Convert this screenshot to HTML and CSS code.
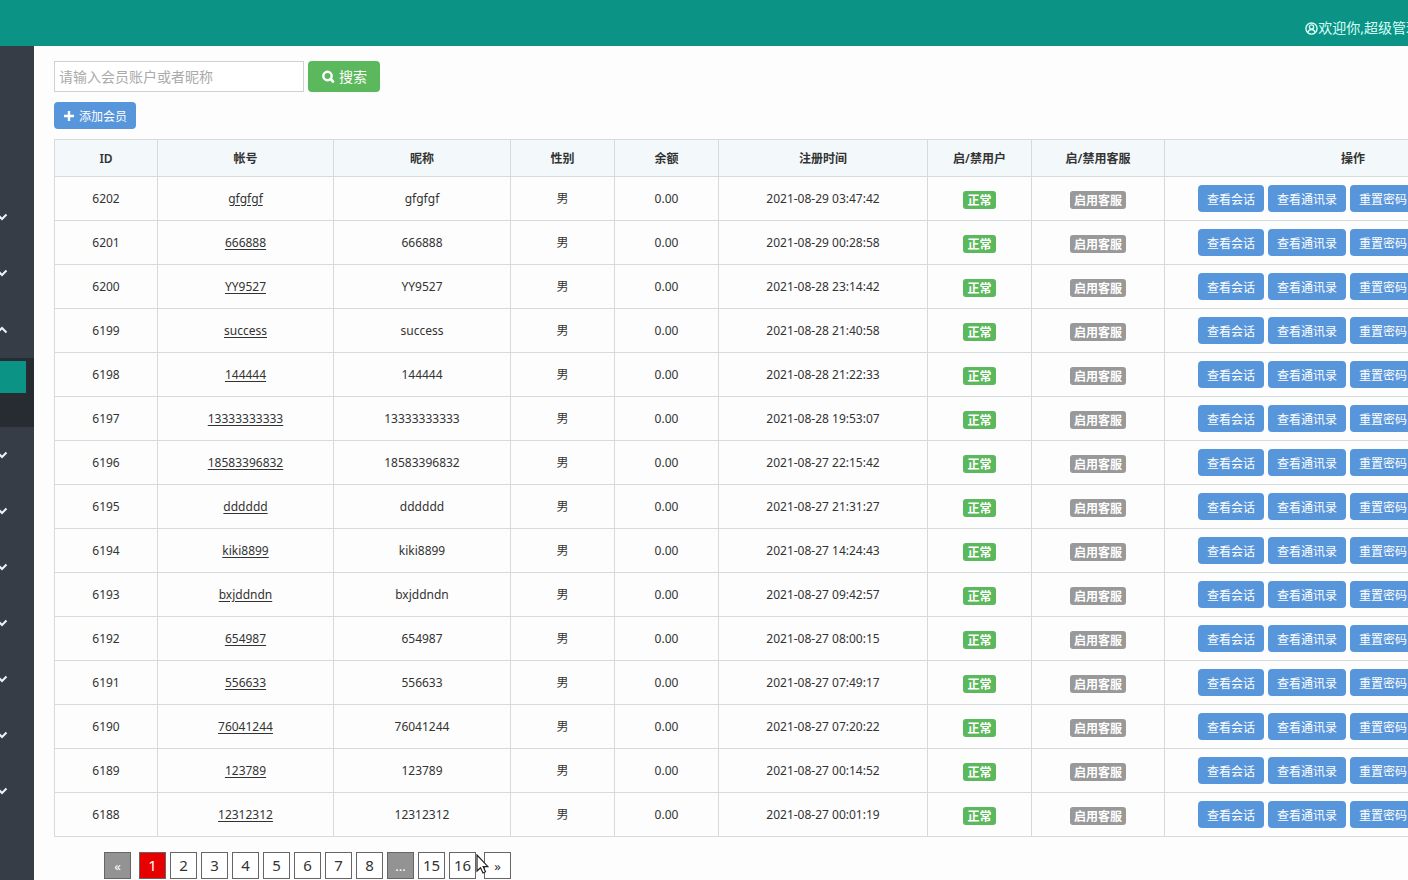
FILE: index.html
```
<!DOCTYPE html>
<html lang="zh-CN">
<head>
<meta charset="utf-8">
<title>会员管理</title>
<link rel="stylesheet" href="styles.css">
</head>
<body>
<div class="page">
  <header class="topbar">
    <svg class="user-icon" viewBox="0 0 14 14" fill="none" stroke="currentColor" stroke-width="1.5"><circle cx="7" cy="7" r="6"/><circle cx="7" cy="5.4" r="2.3"/><path d="M3.2 11.2c.4-2 1.7-3.2 3.8-3.2s3.400 1.200 3.800 3.200"/></svg>
    <span>欢迎你,超级管理员</span>
  </header>
  <div class="body">
    <nav class="sidebar" id="sidebar"></nav>
    <main class="main">
      <form class="search">
        <input class="search-input" type="text" aria-label="搜索会员" placeholder="请输入会员账户或者昵称">
        <button class="btn btn-search" type="button"><svg class="icon-search" viewBox="0 0 14 14" fill="none" stroke="currentColor"><circle cx="6.500" cy="6" r="4.200" stroke-width="2.400"/><path d="M9.800 9.300L12 11.500" stroke-width="2.800" stroke-linecap="round"/></svg>搜索</button>
      </form>
      <div class="toolbar">
        <button class="btn btn-blue btn-add" type="button"><svg class="icon-plus" viewBox="0 0 10 10" stroke="currentColor" stroke-width="2.400"><path d="M5 0V10M0 5H10"/></svg>添加会员</button>
      </div>
      <table class="members">
        <colgroup><col class="c-id"><col class="c-name"><col class="c-nick"><col class="c-small"><col class="c-small"><col class="c-time"><col class="c-small"><col class="c-service"><col></colgroup>
        <thead><tr><th>ID</th><th>帐号</th><th>昵称</th><th>性别</th><th>余额</th><th>注册时间</th><th>启/禁用户</th><th>启/禁用客服</th><th>操作</th></tr></thead>
        <tbody id="rows"></tbody>
      </table>
      <nav class="pager" aria-label="分页">
        <span class="page-box muted first">«</span>
        <span class="page-box current">1</span>
        <a class="page-box" href="#2">2</a>
        <a class="page-box" href="#3">3</a>
        <a class="page-box" href="#4">4</a>
        <a class="page-box" href="#5">5</a>
        <a class="page-box" href="#6">6</a>
        <a class="page-box" href="#7">7</a>
        <a class="page-box" href="#8">8</a>
        <span class="page-box muted">...</span>
        <a class="page-box" href="#15">15</a>
        <a class="page-box" href="#16">16</a>
        <a class="page-box last" href="#next">»</a>
        <svg class="cursor" viewBox="0 0 13 20"><path d="M1 1V17L4.500 13.700L7 19L9.500 17.800L7.200 12.700H12Z" fill="#fff" stroke="#222" stroke-width="1.200"/></svg>
      </nav>
    </main>
  </div>
</div>
<script src="app.js"></script>
</body>
</html>
```
FILE: styles.css
```
* { box-sizing: border-box; }
html { overflow: hidden; }
body {
  margin: 0;
  overflow: hidden;
  background: #fdfdfd;
  color: #333;
  font: 12px/18px "Noto Sans", "Noto Sans CJK SC", sans-serif;
}
button, input { font: inherit; }
.page { min-width: 1562px; min-height: 100vh; display: flex; flex-direction: column; }
.topbar {
  display: flex;
  justify-content: flex-end;
  align-items: center;
  height: 46px;
  padding: 10px 128px 0 0;
  background: #0b9485;
  color: #d9fffa;
  font-size: 14px;
}
.user-icon { width: 13px; height: 13px; }
.body { display: flex; flex: 1; }
.sidebar { width: 34px; flex: none; padding-top: 143px; background: #373d47; overflow: hidden; }
.nav-item {
  display: flex;
  justify-content: flex-end;
  align-items: center;
  width: 100%;
  height: 56px;
  padding: 0 26px 0 0;
  border: 0;
  background: none;
  color: #eef3f7;
}
.nav-item.open { height: 57px; }
.chevron { width: 12px; height: 8px; flex: none; fill: none; stroke: currentColor; stroke-width: 2; }
.open .chevron { transform: rotate(180deg); }
.submenu { height: 69px; padding: 3px 8px 0 0; background: #272b32; }
.submenu-current { display: block; height: 32px; background: #0b9485; }
.main { flex: 1; padding: 15px 20px 0; }
.search { display: flex; gap: 4px; }
.search-input {
  width: 250px;
  height: 31px;
  padding: 0 4px;
  border: 1px solid #d0d0d0;
  background: #fff;
  font-size: 14px;
}
.search-input::placeholder { color: #aaa; }
.btn {
  display: inline-flex;
  align-items: center;
  justify-content: center;
  height: 27px;
  padding: 2px 9px 0;
  border: 0;
  border-radius: 4px;
  color: #fff;
  white-space: nowrap;
}
.btn-search { width: 72px; height: 31px; gap: 4px; padding: 0; background: #5cb85c; font-size: 14px; }
.btn-blue { background: #5896db; }
.btn-add { padding-left: 10px; }
.icon-search { width: 14px; height: 14px; }
.icon-plus { width: 10px; height: 10px; margin: 0 5px 2px 0; }
.toolbar { display: flex; margin: 10px 0; }
.members { width: 100%; table-layout: fixed; border-collapse: collapse; text-align: center; }
.members th, .members td { padding: 0; border: 1px solid #d6dada; }
.members th { height: 37px; padding-top: 2px; background: #f3f9fb; font-weight: 600; }
.members td { height: 44px; }
.c-id { width: 103px; }
.c-name { width: 176px; }
.c-nick { width: 177px; }
.c-small { width: 104px; }
.c-time { width: 209px; }
.c-service { width: 133px; }
.account { color: #333; text-decoration: underline; text-underline-offset: 2px; }
.badge {
  display: inline-block;
  height: 18px;
  margin-top: 3px;
  padding: 1px 4px 0;
  border: 0;
  border-radius: 3px;
  background: #5cb85c;
  color: #fff;
  font-weight: 700;
  line-height: 18px;
  vertical-align: middle;
}
.badge-gray { background: #999; }
.actions { display: flex; justify-content: center; gap: 4px; }
.pager { position: relative; display: flex; gap: 4px; padding: 15px 0 0 50px; }
.page-box {
  display: flex;
  align-items: center;
  justify-content: center;
  width: 27px;
  height: 27px;
  padding-bottom: 2px;
  border: 1px solid #666;
  background: #fff;
  color: #333;
  font-size: 15px;
  text-decoration: none;
}
.muted { padding-bottom: 0; background: #939393; color: #fff; font-size: 13px; }
.current { background: #e60000; color: #fff; }
.first { margin-right: 4px; }
.last { margin-left: 4px; padding-bottom: 0; font-size: 13px; }
.cursor { position: absolute; left: 422px; top: 17px; width: 13px; height: 20px; }
```
FILE: app.js
```
const members = [
  ["6202", "gfgfgf", "2021-08-29 03:47:42"],
  ["6201", "666888", "2021-08-29 00:28:58"],
  ["6200", "YY9527", "2021-08-28 23:14:42"],
  ["6199", "success", "2021-08-28 21:40:58"],
  ["6198", "144444", "2021-08-28 21:22:33"],
  ["6197", "13333333333", "2021-08-28 19:53:07"],
  ["6196", "18583396832", "2021-08-27 22:15:42"],
  ["6195", "dddddd", "2021-08-27 21:31:27"],
  ["6194", "kiki8899", "2021-08-27 14:24:43"],
  ["6193", "bxjddndn", "2021-08-27 09:42:57"],
  ["6192", "654987", "2021-08-27 08:00:15"],
  ["6191", "556633", "2021-08-27 07:49:17"],
  ["6190", "76041244", "2021-08-27 07:20:22"],
  ["6189", "123789", "2021-08-27 00:14:52"],
  ["6188", "12312312", "2021-08-27 00:01:19"]
];
const actions = ["查看会话", "查看通讯录", "重置密码", "编辑", "删除"]
  .map(label => `<button class="btn btn-blue" type="button">${label}</button>`).join("");
document.getElementById("rows").innerHTML = members.map(([id, name, time]) =>
  `<tr><td>${id}</td><td><a class="account" href="#${id}">${name}</a></td><td>${name}</td><td>男</td><td>0.00</td><td>${time}</td>
  <td><button class="badge" type="button">正常</button></td><td><button class="badge badge-gray" type="button">启用客服</button></td>
  <td><div class="actions">${actions}</div></td></tr>`).join("");

const navItem = (open) =>
  `<button class="nav-item${open ? " open" : ""}" type="button" aria-label="菜单" aria-expanded="${open}"><svg class="chevron" viewBox="0 0 12 8"><path d="M1.500 1.500L6 6L10.500 1.500"/></svg></button>`;
document.getElementById("sidebar").innerHTML =
  navItem(false) + navItem(false) + navItem(true) +
  '<div class="submenu"><a class="submenu-current" href="#members" aria-label="会员列表"></a></div>' +
  navItem(false).repeat(7);
```
